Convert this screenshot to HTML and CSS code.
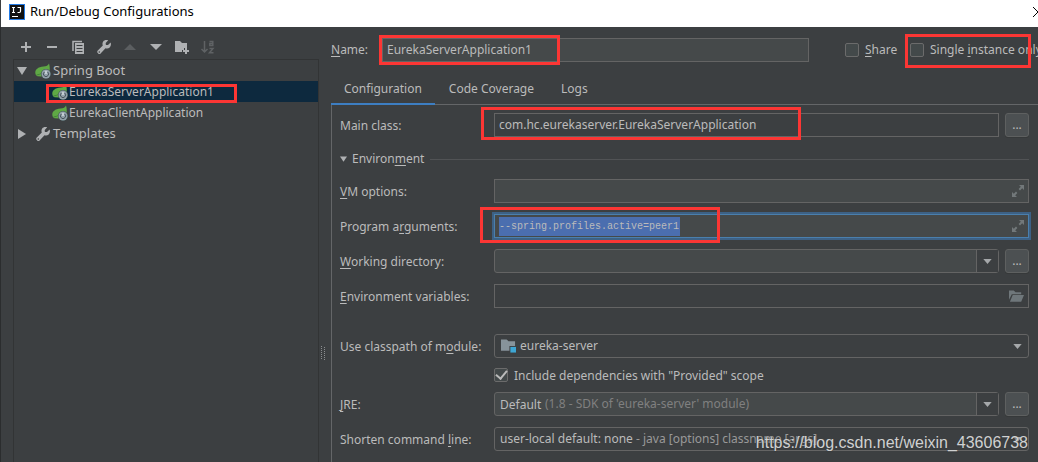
FILE: index.html
```html
<!DOCTYPE html>
<html lang="en">
<head>
<meta charset="utf-8">
<title>Run/Debug Configurations</title>
<link rel="stylesheet" href="styles.css">
</head>
<body>
<svg class="defs" aria-hidden="true">
  <symbol id="i-spring" viewBox="0 0 16 16">
    <path fill="#5fa845" d="M14 .500C13 2.500 11.500 3.200 8.500 3.500 3 4 0 6.500.300 10c.2 1.800 1 2.800 2.200 3.200L7 13.500 14.500 9C15 6 14.800 3 14 .500z"/>
    <path fill="none" stroke="#3f7a38" stroke-width=".8" d="M1.500 12C5.500 11.500 9 9.500 11.500 6"/>
    <circle cx="11" cy="11" r="5" fill="#3c5050"/>
    <circle cx="11" cy="11" r="4.500" fill="#93a1aa"/>
    <path fill="none" stroke="#47545c" d="M9.300 9a2.600 2.600 0 1 0 3.400 0"/>
    <path stroke="#e3e9ec" stroke-width="1.200" d="M11 7.800V11"/>
  </symbol>
  <symbol id="i-wrench" viewBox="0 0 16 16">
    <path fill="#afb1b3" d="M14.600 3.600 12 6.100 9.900 5.900 9.700 3.900 12.200 1.300C10.300.6 8.200 1 7.200 2.500 6.300 3.800 6.300 5.200 6.800 6.500L1.300 12 1.300 13.500 2.700 14.900H4.100L9.500 9.200C11 9.800 12.500 9.500 13.700 8.500 15 7.200 15.300 5.300 14.600 3.600zM3.300 12.200a.8.800 0 1 1 0 1.600.8.800 0 0 1 0-1.600z"/>
  </symbol>
  <symbol id="i-expand" viewBox="0 0 12 12">
    <path fill="#72787a" d="M7 0h5v5l-1.800-1.800L8 5.400 6.600 4 8.800 1.800zM0 7l1.800 1.800L4 6.600 5.400 8 3.200 10.200 5 12H0z"/>
  </symbol>
  <symbol id="i-down" viewBox="0 0 10 6"><path fill="#a5a8aa" d="M0 0h10L5 6z"/></symbol>
</svg>

<header class="titlebar">
  <svg class="logo" viewBox="0 0 16 16" aria-hidden="true">
    <rect width="16" height="16" fill="#247be5"/><rect x="1" y="1" width="14" height="14" fill="#111"/>
    <path fill="none" stroke="#fff" stroke-width="1.200" d="M3 3.500h3M4.500 3.500v5M3 8.500h3M8.500 3.500h3v3.800q0 1.200-1.200 1.200H8.500M3 12.500h6"/>
  </svg>
  <h1>Run/Debug Configurations</h1>
  <button class="close" aria-label="Close"><svg viewBox="0 0 10 10"><path stroke="#000" d="M0 0l10 10M10 0 0 10"/></svg></button>
</header>

<main class="dialog">
  <aside class="sidebar">
    <div class="toolbar">
      <button aria-label="Add"><svg viewBox="0 0 16 16"><path stroke="#afb1b3" stroke-width="2" d="M3 8h10M8 3v10"/></svg></button>
      <button aria-label="Remove"><svg viewBox="0 0 16 16"><path stroke="#afb1b3" stroke-width="2" d="M3 8h10"/></svg></button>
      <button aria-label="Copy"><svg viewBox="0 0 16 16"><path fill="none" stroke="#afb1b3" stroke-width="1.500" d="M3 12V2.500h9"/><path fill="#afb1b3" d="M5 4h9v11H5z"/><path stroke="#3c3f41" d="M6.500 6.500h6M6.500 9.500h6M6.500 12.500h6"/></svg></button>
      <button aria-label="Edit defaults"><svg><use href="#i-wrench"/></svg></button>
      <button aria-label="Move up" disabled><svg viewBox="0 0 16 16"><path fill="#5b5e60" d="M2 11h12L8 5z"/></svg></button>
      <button aria-label="Move down"><svg viewBox="0 0 16 16"><path fill="#afb1b3" d="M2 5h12l-6 6z"/></svg></button>
      <button aria-label="Create folder"><svg viewBox="0 0 16 16"><path fill="#afb1b3" d="M1 2h5l2 2h5v5h-3v2H8v2H1z"/><path stroke="#afb1b3" stroke-width="2" d="M9 12h6M12 9v6"/></svg></button>
      <button aria-label="Sort" disabled><svg viewBox="0 0 16 16"><path fill="none" stroke="#5f6264" stroke-width="1.500" d="M4.500 2v11M1.500 10l3 3 3-3M9.500 2.500h3.300v4h-3V4.500h3M9.500 9.500H13l-3.500 4.300h4"/></svg></button>
    </div>
    <ul class="tree">
      <li class="group"><svg class="arrow" viewBox="0 0 10 10"><path d="M0 1h10L5 9z"/></svg><svg class="icon"><use href="#i-spring"/></svg><span>Spring Boot</span></li>
      <li class="leaf selected"><svg class="icon"><use href="#i-spring"/></svg>EurekaServerApplication1<span class="mark mark-tree"></span></li>
      <li class="leaf"><svg class="icon"><use href="#i-spring"/></svg>EurekaClientApplication</li>
      <li class="group"><svg class="arrow" viewBox="0 0 10 10"><path d="M1 0v10l8-5z"/></svg><svg class="icon"><use href="#i-wrench"/></svg><span>Templates</span></li>
    </ul>
  </aside>

  <div class="splitter"><svg viewBox="0 0 4 14"><path stroke="#8b8d8f" stroke-dasharray="1 1" d="M.5 0v14M3.500 1v13"/></svg></div>

  <section class="editor">
    <div class="name-row">
      <label for="name"><u>N</u>ame:</label>
      <div class="field name-field"><input id="name" value="EurekaServerApplication1"><span class="mark mark-name"></span></div>
      <div class="check share"><input type="checkbox" id="share"><label for="share"><u>S</u>hare</label></div>
      <div class="check single"><input type="checkbox" id="single"><label for="single">Single <u>i</u>nstance only</label><span class="mark mark-single"></span></div>
    </div>
    <nav class="tabs">
      <button class="active">Configuration</button><button>Code Coverage</button><button>Logs</button>
    </nav>
    <form class="form">
      <label for="main">Main class:</label>
      <div class="controls"><div class="field plain"><input id="main" value="com.hc.eurekaserver.EurekaServerApplication"><span class="mark mark-main"></span></div><button type="button" class="more" aria-label="Browse main class">...</button></div>

      <div class="section"><svg viewBox="0 0 8 6"><path fill="#afb1b3" d="M0 0h8L4 6z"/></svg><span>Environ<u>m</u>ent</span></div>

      <label for="vm"><u>V</u>M options:</label>
      <div class="field"><input id="vm"><svg class="expand"><use href="#i-expand"/></svg></div>

      <label for="args">Program a<u>r</u>guments:</label>
      <div class="field focused"><input id="args" class="highlighted" value="--spring.profiles.active=peer1"><svg class="expand"><use href="#i-expand"/></svg><span class="mark mark-args"></span></div>

      <label for="wd"><u>W</u>orking directory:</label>
      <div class="controls"><div class="field round"><input id="wd"><button type="button" class="drop" aria-label="Show directories"><svg><use href="#i-down"/></svg></button></div><button type="button" class="more" aria-label="Browse directory">...</button></div>

      <label for="env"><u>E</u>nvironment variables:</label>
      <div class="field plain"><input id="env"><svg class="folder" viewBox="0 0 16 12"><path fill="#6f777b" d="M0 0h5l2 2h6v2H3L0 10zM4 5h12l-3 7H1z"/></svg></div>

      <label for="module" class="spaced">Use classpath of m<u>o</u>dule:</label>
      <div class="field plain round spaced"><svg class="module" viewBox="0 0 16 14"><path fill="#87939a" d="M0 0h6l2 2h7v5H9v5H0z"/><path fill="#3ea6d3" d="M10 8h6v6h-6z"/></svg><select id="module" class="with-icon"><option>eureka-server</option></select><svg class="chevron"><use href="#i-down"/></svg></div>

      <div class="check provided"><input type="checkbox" id="provided" checked><label for="provided">Include dependencies with "Provided" scope</label></div>

      <label for="jre"><u>J</u>RE:</label>
      <div class="controls"><div class="field round"><input id="jre" value="Default"><span class="hint hint-jre">(1.8 - SDK of 'eureka-server' module)</span><button type="button" class="drop" aria-label="Show JREs"><svg><use href="#i-down"/></svg></button></div><button type="button" class="more" aria-label="Browse JRE">...</button></div>

      <label for="shorten">Shorten command <u>l</u>ine:</label>
      <div class="field plain round"><select id="shorten"><option>user-local default: none</option></select><span class="hint hint-shorten">- java [options] classname [args]</span><svg class="chevron"><use href="#i-down"/></svg></div>
    </form>
  </section>
</main>
<div class="watermark">https://blog.csdn.net/weixin_43606738</div>
</body>
</html>
```
FILE: styles.css
```css
* { box-sizing: border-box; }
body {
  margin: 0;
  min-height: 100vh;
  display: flex;
  flex-direction: column;
  overflow: hidden;
  position: relative;
  background: #3c3f41;
  color: #bbbbbb;
  font: 12px/20px "Noto Sans", "Open Sans", sans-serif;
}
button, input, select { font: inherit; color: inherit; margin: 0; padding: 0; border: 0; background: none; }
input, select { outline: 0; min-width: 0; }
label, li, h1, button { white-space: nowrap; }
svg { display: block; flex: none; }
u { text-underline-offset: 2px; }
.defs { position: absolute; width: 0; height: 0; }

.titlebar {
  display: flex;
  align-items: center;
  height: 27px;
  padding: 0 0 4px 8px;
  margin-left: 1px;
  background: #fff;
  color: #000;
  overflow: hidden;
}
.logo { width: 16px; height: 16px; }
.titlebar h1 { margin: 0 auto 0 5px; font-size: 13px; line-height: 18px; padding-bottom: 2px; font-weight: 400; }
.close { margin-right: -5px; }
.close svg { width: 10px; height: 10px; }

.dialog { flex: 1; display: flex; border-left: 1px solid #2b2d2e; }
.sidebar { flex: 0 0 318px; display: flex; flex-direction: column; padding-left: 12px; }
.toolbar { display: flex; align-items: center; gap: 10px; height: 32px; padding: 8px 0 0 5px; }
.toolbar svg { width: 16px; height: 16px; }
.tree {
  flex: 1;
  margin: 0;
  padding: 0;
  list-style: none;
  border: solid #323435;
  border-width: 1px 1px 0;
  font-size: 13px;
}
.tree li { display: flex; align-items: center; height: 21px; position: relative; }
.group { padding-left: 3px; }
.group span { padding-bottom: 2px; }
.leaf { padding-left: 38px; font-size: 12px; }
.selected { background: #0d293e; }
.arrow { width: 10px; height: 10px; margin-right: 8px; fill: #afb1b3; }
.icon { width: 16px; height: 16px; margin-right: 2px; }
.leaf .icon { margin-right: 1px; }
.splitter { flex: 0 0 12px; display: flex; align-items: center; padding: 216px 0 0 2px; }
.splitter svg { width: 4px; height: 14px; }

.editor { flex: 1; min-width: 0; }
.name-row { display: flex; align-items: center; height: 46px; }
.name-row > label { width: 51px; }
.name-field { flex: 1; }
.check { display: flex; align-items: center; gap: 6px; position: relative; }
.check input {
  appearance: none;
  flex: none;
  width: 14px;
  height: 14px;
  border: 1px solid #6b6b6b;
  border-radius: 2px;
  background: #43494a;
}
.share { flex: 0 0 65px; margin-left: 36px; }
.single { flex: 0 0 128px; min-width: 0; }
.tabs { display: flex; gap: 1px; height: 32px; border-bottom: 1px solid #646668; }
.tabs button { height: 32px; padding: 0 13px; }
.tabs .active { border-bottom: 2px solid #3d7ec2; padding-top: 2px; }

.form {
  display: grid;
  grid-template-columns: 146px minmax(0, 1fr);
  gap: 11px 8px;
  align-items: center;
  padding: 8px 9px 11px 8px;
  border-left: 1px solid #646668;
}
.form > label { padding-top: 2px; }
.controls { display: flex; gap: 6px; min-width: 0; }
.controls .field { flex: 1; }
.field {
  display: flex;
  align-items: center;
  height: 24px;
  min-width: 0;
  position: relative;
  border: 1px solid #646464;
  background: #45494a;
}
.field input, .field select { flex: 1; width: 0; height: 22px; padding: 0 5px; }
.field input { padding: 0 4px 1px; }
.plain { background: #3c3f41; }
.round { border-radius: 3px; }
.field.round input { padding: 0 5px; }
.focused { border-color: #4a7fad; box-shadow: 0 0 0 2px #3d6185; }
.field .highlighted {
  flex: 0 0 181px;
  height: 19px;
  margin-left: 4px;
  padding: 0;
  background: #4b6eaf;
  font: 10px "Liberation Mono", monospace;
}
.field select { appearance: none; }
.field .with-icon { padding-left: 4px; }
.expand { width: 12px; height: 12px; margin: 0 4px 0 auto; }
.folder { width: 15px; height: 12px; margin-right: 4px; }
.module { width: 15px; height: 14px; margin-left: 6px; }
.chevron { width: 9px; height: 5px; margin-right: 6px; }
.drop { display: flex; align-items: center; justify-content: center; width: 22px; height: 22px; border-left: 1px solid #646464; background: #3c3f41; }
.drop svg { width: 9px; height: 5px; }
.more { flex: none; width: 24px; height: 24px; border: 1px solid #5e6060; border-radius: 3px; background: #4c5052; box-shadow: 0 1px 0 #36393a; }
.section { grid-column: 1 / -1; display: flex; align-items: center; height: 20px; padding-top: 2px; }
.section svg { width: 7px; height: 6px; margin-right: 5px; }
.section::after { content: ""; flex: 1; height: 1px; margin-left: 6px; background: #515355; }
.spaced { margin-top: 15px; }
.provided { grid-column: 2; height: 12px; }
.provided label { padding-top: 2px; }
.provided input:checked { display: grid; place-items: center; }
.provided input::after {
  content: "";
  width: 5px;
  height: 9px;
  margin-top: -3px;
  border: solid #bbbbbb;
  border-width: 0 2px 2px 0;
  rotate: 40deg;
}
.hint { position: absolute; top: 1px; white-space: nowrap; pointer-events: none; color: #808080; }
.hint-jre { left: 50px; }
.hint-shorten { left: 141px; color: #999999; }

.mark { position: absolute; border: 3px solid #fc3634; pointer-events: none; }
.mark-tree { left: 32px; top: 3px; width: 191px; height: 19px; }
.mark-name { left: -4px; top: -4px; width: 181px; height: 30px; }
.mark-single { left: -5px; top: -6px; width: 126px; height: 34px; }
.mark-main { left: -14px; top: -7px; width: 320px; height: 33px; }
.mark-args { left: -15px; top: -8px; width: 240px; height: 36px; }
.watermark { position: absolute; right: 10px; bottom: 9px; color: #d0d1d1; font: 16px/20px "Liberation Sans", Arial, sans-serif; text-shadow: 0 1px 1px #33363799; }
```
